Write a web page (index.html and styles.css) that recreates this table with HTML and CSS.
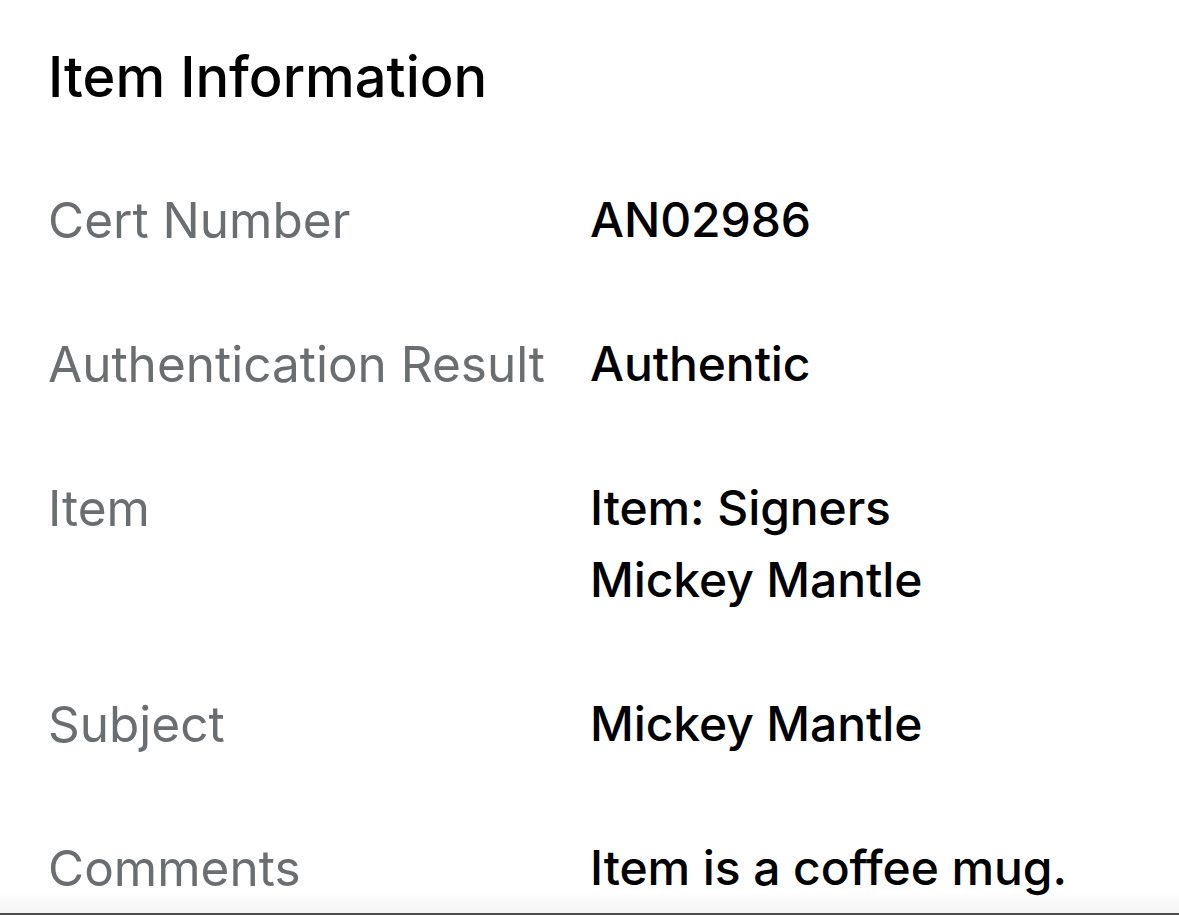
FILE: index.html
```html
<!DOCTYPE html>
<html lang="en">
<head>
  <meta charset="UTF-8">
  <title>Item Information</title>
  <link rel="stylesheet" href="styles.css">
</head>
<body>
  <div class="card">
    <h2 class="title">Item Information</h2>

    <div class="details">
      <div class="label">Cert Number</div>
      <div class="value">AN02986</div>

      <div class="label">Authentication Result</div>
      <div class="value">Authentic</div>

      <div class="label">Item</div>
      <div class="value">Item: Signers<br>Mickey Mantle</div>

      <div class="label">Subject</div>
      <div class="value">Mickey Mantle</div>

      <div class="label">Comments</div>
      <div class="value">Item is a coffee mug.</div>
    </div>
  </div>

  <div class="screen-edge"></div>
</body>
</html>
```
FILE: styles.css
```css
body {
  margin: 0;
  background: #fff;
  color: #000;
  font-family: Inter, "Liberation Sans", sans-serif;
  height: 915px;
  overflow: hidden;
}

.card {
  padding: 41px 0 0 48px;
}

.title {
  margin: 0;
  font-size: 56px;
  font-weight: 500;
  line-height: 72px;
}

.details {
  display: grid;
  grid-template-columns: 542px 1fr;
  row-gap: 72px;
  margin-top: 71px;
  align-items: start;
}

.label {
  font-size: 49.5px;
  line-height: 72px;
  color: #6b6e70;
}

.value {
  font-size: 48px;
  font-weight: 500;
  line-height: 72px;
  letter-spacing: -0.1px;
}

.screen-edge {
  position: fixed;
  left: 0;
  right: 0;
  bottom: 0;
  height: 20px;
  background: linear-gradient(to bottom, rgba(240,240,240,0), #f3f3f3);
  border-bottom: 2px solid #4d4d4d;
}
```
